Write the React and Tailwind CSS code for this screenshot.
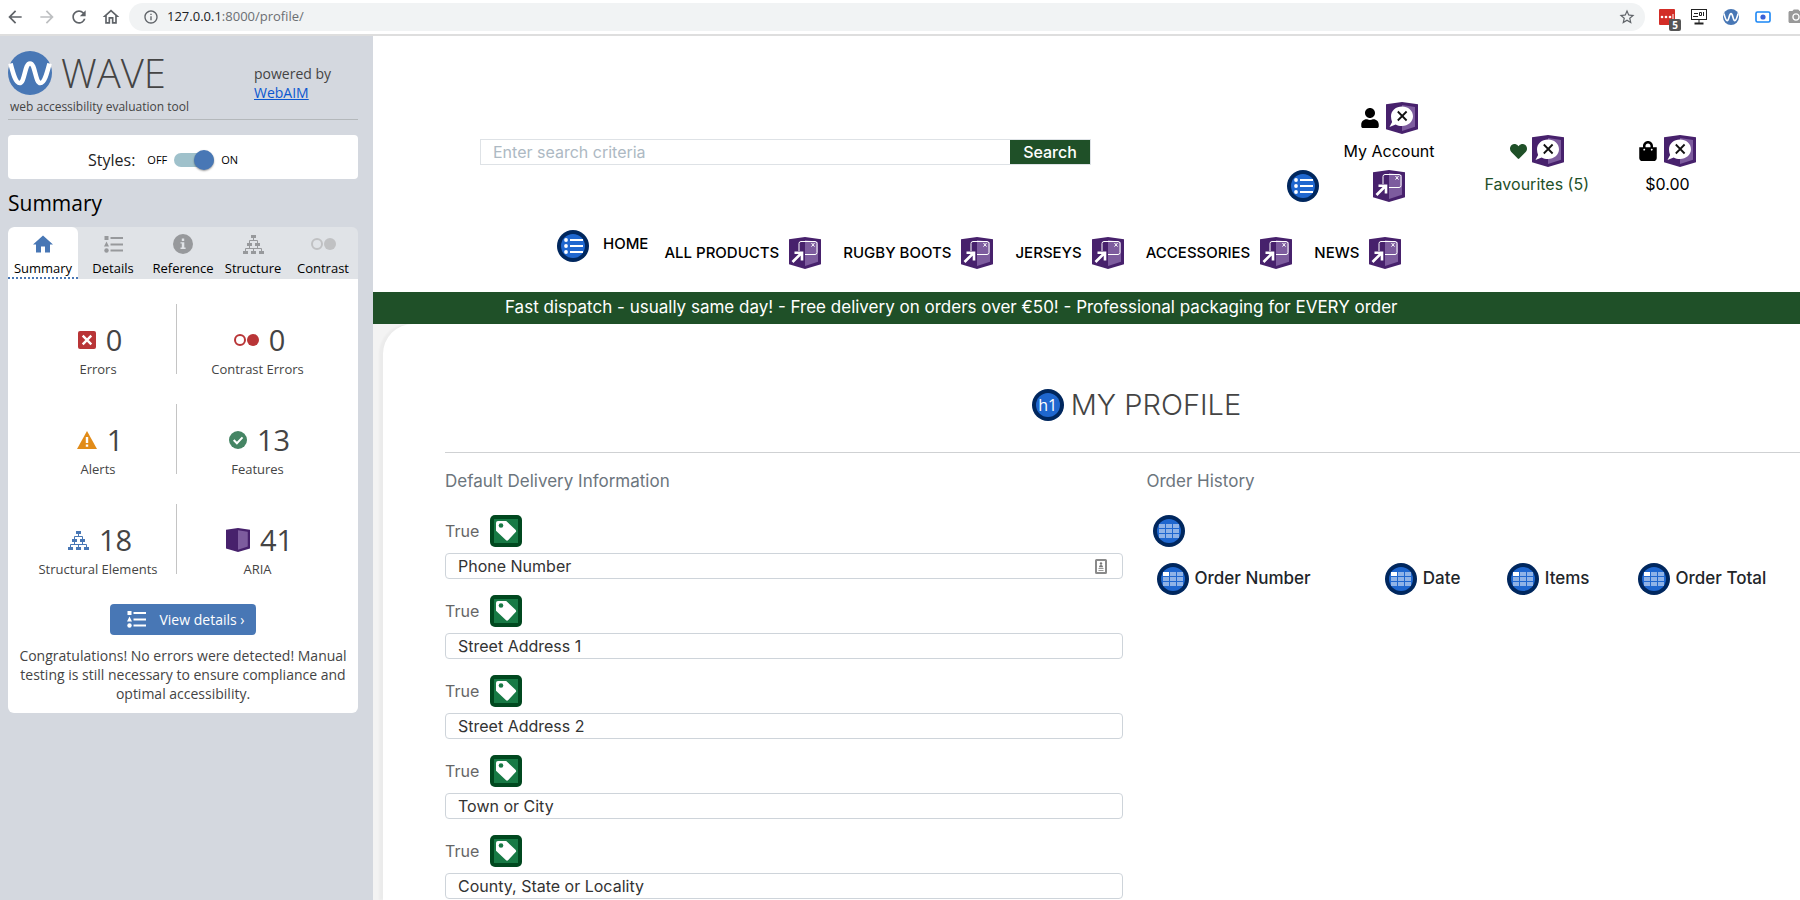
import React from "react";
import { FaUser, FaHeart, FaShoppingBag } from "react-icons/fa";
import { MdArrowBack, MdArrowForward, MdRefresh, MdOutlineHome, MdInfoOutline, MdStarBorder, MdCameraAlt } from "react-icons/md";

/* ---------- icons ---------- */

function WaveLogo({ className }) {
  return (
    <svg viewBox="0 0 44 44" className={className} aria-hidden="true">
      <circle cx="22" cy="22" r="22" fill="#4877b5" />
      <path d="M2.500 12.500C5 22 7.500 32 11.500 32C17 32 16.500 12.500 22 12.500C27.500 12.500 27 32 32.500 32C36.500 32 39 22 41.500 12.500" fill="none" stroke="#fff" strokeWidth="4.600" />
    </svg>
  );
}

function AriaBox({ className, children }) {
  return (
    <svg viewBox="0 0 32 32" className={className} aria-hidden="true">
      <path d="M0 2.200 16 0l16 2.200v25L16 32 0 27.200z" fill="#47216c" />
      <path d="M16 3l13 2v19.800L16 29z" fill="#7d5c9e" />
      {children}
    </svg>
  );
}

function AriaLabel() {
  return (
    <AriaBox className="size-8 shrink-0">
      <path d="M16 4.500c6 0 11 4.200 11 9.700s-5 9.700-11 9.700c-2.400 0-4.500-.5-6.300-1.500L3.500 25l2.600-5C5.400 18.300 5 16.300 5 14.200c0-5.500 5-9.700 11-9.700z" fill="#fff" />
      <path d="M11.800 9.500l8.800 9M20.600 9.500l-8.800 9" stroke="#111" strokeWidth="1.800" />
    </AriaBox>
  );
}

function AriaExpand() {
  return (
    <AriaBox className="size-8 shrink-0">
      <path d="M10 14V6.500a2 2 0 0 1 2-2h14a2 2 0 0 1 2 2v9a2 2 0 0 1-2 2H16" fill="none" stroke="#fff" strokeWidth="1" />
      <path d="M22.500 6l3 3.600M25.500 6l-3 3.600" stroke="#fff" strokeWidth="1" />
      <path d="M3.500 25L12 16.500M5.500 15.800H13v7.700" fill="none" stroke="#fff" strokeWidth="2.600" />
    </AriaBox>
  );
}

function BlueDisc({ children }) {
  return (
    <svg viewBox="0 0 32 32" className="size-8 shrink-0" aria-hidden="true">
      <circle cx="16" cy="16" r="16" fill="#00275e" />
      <circle cx="16" cy="16" r="12" fill="#1f67cf" />
      {children}
    </svg>
  );
}

function ListDisc() {
  return (
    <BlueDisc>
      {[10, 16, 22].map((y) => (
        <g key={y} fill="#fff">
          <circle cx="9" cy={y} r="1.900" />
          <rect x="13" y={y - 1} width="13" height="2" />
        </g>
      ))}
    </BlueDisc>
  );
}

function GridDisc({ header }) {
  return (
    <BlueDisc>
      {[9, 14, 19].map((y) =>
        [6, 13, 20].map((x) => (
          <rect key={x + "-" + y} x={x} y={y} width="6" height="4" fill={header && x === 6 && y === 9 ? "#fff" : "#8fb3e7"} />
        ))
      )}
    </BlueDisc>
  );
}

function TagBadge() {
  return (
    <svg viewBox="0 0 32 32" className="size-8 shrink-0" aria-hidden="true">
      <rect width="32" height="32" rx="5" fill="#00481f" />
      <rect x="4" y="4" width="24" height="24" fill="#177a45" />
      <path d="M6 8a2 2 0 0 1 2-2h8.200L25.500 14.700a1.700 1.700 0 0 1 0 2.500L18.300 25a1.700 1.700 0 0 1-2.500 0L6 15.800z" fill="#fff" />
      <circle cx="11" cy="10.500" r="2.300" fill="#177a45" />
    </svg>
  );
}

function HomeGlyph() {
  return (
    <svg viewBox="0 0 20 18" className="h-[18px] w-5" aria-hidden="true">
      <path d="M10 0.500L0 9.500h3V17.500h5v-6h4v6h5V9.500h3z" fill="#4877b5" />
    </svg>
  );
}

function DetailsGlyph() {
  return (
    <svg viewBox="0 0 19 17" className="h-[17px] w-[19px]" fill="currentColor" aria-hidden="true">
      <rect x="0.500" y="0" width="4" height="4" />
      <path d="M2.500 5.500l2.500 5H0z" />
      <circle cx="2.500" cy="14.500" r="2.200" />
      <rect x="6.500" y="1" width="12.500" height="2" />
      <rect x="6.500" y="7.500" width="12.500" height="2" />
      <rect x="6.500" y="13.500" width="12.500" height="2" />
    </svg>
  );
}

function InfoGlyph() {
  return (
    <svg viewBox="0 0 20 20" className="size-5" aria-hidden="true">
      <circle cx="10" cy="10" r="10" fill="#97999c" />
      <path d="M8.800 4.500h2.400v2.400H8.800zM7.500 8.200h3.800v5.400h1.300V15H7.500v-1.400h1.300V9.600H7.500z" fill="#e0e3e7" />
    </svg>
  );
}

function StructureGlyph() {
  return (
    <svg viewBox="0 0 21 19" className="h-[19px] w-[21px] shrink-0" aria-hidden="true">
      <g fill="currentColor">
        <rect x="8" y="0" width="5" height="3" />
        <rect x="4" y="8" width="5" height="3" />
        <rect x="12" y="8" width="5" height="3" />
        <rect x="0" y="16" width="5" height="3" />
        <rect x="8" y="16" width="5" height="3" />
        <rect x="16" y="16" width="5" height="3" />
      </g>
      <path d="M10.500 3v3M6.500 8V5.500h8V8M6.500 11v2.500M14.500 11v2.500M2.500 16v-2.500h16V16M10.500 13.500V16" fill="none" stroke="currentColor" />
    </svg>
  );
}

function ContrastGlyph() {
  return (
    <svg viewBox="0 0 25 12" className="h-3 w-[25px] shrink-0" aria-hidden="true">
      <circle cx="6" cy="6" r="5" fill="none" stroke="currentColor" strokeWidth="2" />
      <circle cx="19" cy="6" r="6" fill="currentColor" />
    </svg>
  );
}

function ErrorGlyph() {
  return (
    <svg viewBox="0 0 18 18" className="size-[18px] shrink-0" aria-hidden="true">
      <rect width="18" height="18" rx="2" fill="#b93537" />
      <path d="M4.700 4.700l8.600 8.600M13.300 4.700l-8.600 8.600" stroke="#fff" strokeWidth="2.400" />
    </svg>
  );
}

function AlertGlyph() {
  return (
    <svg viewBox="0 0 20 18" className="h-[18px] w-5 shrink-0" aria-hidden="true">
      <path d="M10 0l10 18H0z" fill="#e18b18" />
      <path d="M8.800 6h2.400v6H8.800zM8.800 13.500h2.400v2.300H8.800z" fill="#fff" />
    </svg>
  );
}

function FeatureGlyph() {
  return (
    <svg viewBox="0 0 18 18" className="size-[18px] shrink-0" aria-hidden="true">
      <circle cx="9" cy="9" r="9" fill="#458564" />
      <path d="M4.700 9l3.200 3.200 5.600-5.800" fill="none" stroke="#fff" strokeWidth="2" />
    </svg>
  );
}

function ContactGlyph() {
  return (
    <svg viewBox="0 0 12 15" className="h-[15px] w-3" aria-hidden="true">
      <rect x="1" y="1" width="10" height="13" rx="0.500" fill="#fff" stroke="#8a8a8a" strokeWidth="2" />
      <circle cx="6" cy="4.500" r="1.200" fill="#777" />
      <path d="M4 8.200c0-3 4-3 4 0z" fill="#777" />
      <path d="M3.500 9.500h5M3.500 11.500h5" stroke="#999" />
    </svg>
  );
}

/* ---------- browser toolbar ---------- */

function Toolbar() {
  return (
    <div className="flex h-9 shrink-0 items-center border-b-2 border-[#dedede] bg-white pl-[5px] font-['Open_Sans',sans-serif]">
      <div className="flex items-center gap-3 text-[#5f6368]">
        <button aria-label="Back"><MdArrowBack className="size-5" /></button>
        <button aria-label="Forward" className="text-[#bdbfc1]"><MdArrowForward className="size-5" /></button>
        <button aria-label="Reload"><MdRefresh className="size-5" /></button>
        <button aria-label="Home"><MdOutlineHome className="size-5" /></button>
      </div>
      <div className="ml-2 flex h-7 flex-1 items-center rounded-full bg-[#f1f3f4] pr-[9px] pl-[14px]">
        <MdInfoOutline className="size-4 text-[#5f6368]" />
        <p className="flex-1 pl-2 text-[13px] text-[#6b6f73]">
          <span className="text-[#202124]">127.0.0.1</span>:8000/profile/
        </p>
        <button aria-label="Bookmark"><MdStarBorder className="size-[18px] text-[#5f6368]" /></button>
      </div>
      <div className="flex h-full w-[155px] shrink-0 items-center gap-4 overflow-hidden pl-[14px]">
        <button aria-label="Passwords" className="relative">
          <svg viewBox="0 0 16 16" className="size-4">
            <rect width="16" height="16" rx="1" fill="#d32d27" />
            <circle cx="3" cy="8" r="1.300" fill="#fff" />
            <circle cx="7" cy="8" r="1.300" fill="#fff" />
            <circle cx="11" cy="8" r="1.300" fill="#fff" />
            <rect x="13.500" y="5" width="1" height="6" fill="#fff" />
          </svg>
          <span className="absolute top-[10px] left-[10px] flex size-3 items-center justify-center rounded-xs bg-[#555] text-[10px] leading-3 font-bold text-white">5</span>
        </button>
        <button aria-label="Desktop">
          <svg viewBox="0 0 16 16" className="size-4" fill="none" stroke="#222">
            <rect x="0.500" y="0.500" width="15" height="10" />
            <path d="M3 4.500h4M2 7.500h5M8.500 3.500h2v3h-2zM12.500 3v4M0 10.500h16M8 11v3" />
            <path d="M3.500 14.500h9" strokeWidth="2" />
          </svg>
        </button>
        <button aria-label="WAVE"><WaveLogo className="size-4" /></button>
        <button aria-label="Capture">
          <svg viewBox="0 0 16 12" className="h-3 w-4">
            <rect x="1" y="1" width="14" height="10" rx="1.500" fill="#fff" stroke="#1a86f5" strokeWidth="1.600" />
            <circle cx="8" cy="6" r="2.600" fill="#3a62d8" />
          </svg>
        </button>
        <button aria-label="Screenshot"><MdCameraAlt className="size-[18px] text-[#999]" /></button>
      </div>
    </div>
  );
}

/* ---------- evaluation sidebar ---------- */

const tabs = [
  { label: "Summary", icon: <HomeGlyph />, active: true },
  { label: "Details", icon: <DetailsGlyph /> },
  { label: "Reference", icon: <InfoGlyph /> },
  { label: "Structure", icon: <StructureGlyph /> },
  { label: "Contrast", icon: <span className="text-[#c0c1c3]"><ContrastGlyph /></span> },
];

const stats = [
  { label: "Errors", count: 0, icon: <ErrorGlyph /> },
  { label: "Contrast Errors", count: 0, icon: <span className="text-[#b93537]"><ContrastGlyph /></span> },
  { label: "Alerts", count: 1, icon: <AlertGlyph /> },
  { label: "Features", count: 13, icon: <FeatureGlyph /> },
  { label: "Structural Elements", count: 18, icon: <span className="text-[#4877b5]"><StructureGlyph /></span> },
  { label: "ARIA", count: 41, icon: <AriaBox className="size-6" /> },
];

function Sidebar() {
  return (
    <aside className="w-[373px] shrink-0 bg-[#d4d8df] pt-[15px] pr-[15px] pl-2 font-['Open_Sans',sans-serif] text-[#444]">
      <div className="flex items-start border-b border-[#b4b8bb] pb-[2px]">
        <div className="w-[246px]">
          <div className="flex h-11 items-center gap-[9px]">
            <WaveLogo className="size-11" />
            <span className="text-[40px] leading-[44px] font-light">WAVE</span>
          </div>
          <p className="mt-[2px] pl-[2px] text-[12px] leading-5">web accessibility evaluation tool</p>
        </div>
        <p className="pt-[13px] text-[14px] leading-[19px]">
          powered by
          <br />
          <a href="#webaim" className="text-[#0b57d0] underline">WebAIM</a>
        </p>
      </div>

      <div className="mt-[15px] flex h-11 items-center rounded bg-white pt-[6px] pl-20 text-black">
        <span className="mr-3 text-base text-[#222]">Styles:</span>
        <label className="flex items-center gap-[7px] text-[11px]">
          <span>OFF</span>
          <input type="checkbox" defaultChecked aria-label="Styles" className="peer sr-only" />
          <span className="flex h-[14px] w-10 items-center justify-end rounded-full bg-[#9fc1cb]">
            <span className="size-5 shrink-0 rounded-full bg-[#4877b5] shadow-[0_1px_2px_#0006]" />
          </span>
          <span>ON</span>
        </label>
      </div>

      <h2 className="mt-[9px] text-[21px] leading-[30px] text-black">Summary</h2>

      <div role="tablist" className="mt-[9px] grid grid-cols-5 overflow-hidden rounded-t-md bg-[#e0e3e7]">
        {tabs.map((t) => (
          <button
            key={t.label}
            role="tab"
            aria-selected={!!t.active}
            className={
              t.active
                ? "flex h-[52px] flex-col items-center rounded-t-md border-b-2 border-dotted border-[#4877b5] bg-white pt-1"
                : "flex h-[52px] flex-col items-center border-b-2 border-transparent pt-1"
            }
          >
            <span className="flex h-7 items-center pb-[2px] text-[#97999c]">{t.icon}</span>
            <span className="text-[13px] leading-[18px] text-black">{t.label}</span>
          </button>
        ))}
      </div>

      <div className="rounded-b-md bg-white pb-[10px] text-center">
        <div className="grid grid-cols-2 gap-y-[30px] pt-[25px] pr-6 pl-3">
          {stats.map((s, i) => (
            <div
              key={s.label}
              className={
                i % 2
                  ? "-mr-1 flex h-[70px] flex-col items-center"
                  : "flex h-[70px] flex-col items-center border-r border-[#c4c4c4]"
              }
            >
              <p className="flex h-[56px] items-center gap-[10px] pt-4 pl-1 text-[29px] leading-10">
                {s.icon}
                <span>{s.count}</span>
              </p>
              <p className="text-[13px] leading-[18px]">{s.label}</p>
            </div>
          ))}
        </div>
        <button className="mt-[30px] inline-flex h-[31px] items-center gap-[13px] rounded bg-[#4877b5] pr-[11px] pl-[17px] text-[14px] text-white">
          <DetailsGlyph />
          View details ›
        </button>
        <p className="mt-[11px] px-2 text-[14px] leading-[19px]">
          Congratulations! No errors were detected! Manual testing is still necessary to ensure compliance and optimal accessibility.
        </p>
      </div>
    </aside>
  );
}

/* ---------- shop page ---------- */

const menu = ["ALL PRODUCTS", "RUGBY BOOTS", "JERSEYS", "ACCESSORIES", "NEWS"];

function ShopHeader() {
  return (
    <header className="bg-white text-black">
      <div className="flex h-[179px] items-start justify-between pt-[66px] pr-[104px] pl-[107px]">
        <form className="mt-[37px] flex h-[26px] w-[611px] border border-[#dee2e6]">
          <input
            type="text"
            aria-label="Search"
            placeholder="Enter search criteria"
            className="min-w-0 flex-1 px-3 text-base outline-none placeholder:text-[#adb9c3]"
          />
          <button type="button" className="w-20 bg-[#1f5028] text-base font-medium text-white">Search</button>
        </form>
        <ul className="flex items-start gap-[50px] text-base">
          <li className="flex gap-6">
            <div className="pt-[68px]"><ListDisc /></div>
            <a href="#account" className="flex flex-col items-center">
              <span className="flex items-center gap-[7px]">
                <FaUser className="h-5 w-[18px]" />
                <AriaLabel />
              </span>
              <span className="mt-[5px] leading-6">My Account</span>
              <span className="mt-[7px]"><AriaExpand /></span>
            </a>
          </li>
          <li className="pt-[33px]">
            <a href="#favourites" className="flex flex-col items-center text-[#1f5028]">
              <span className="flex items-center gap-[5px]">
                <FaHeart className="size-[17px]" />
                <AriaLabel />
              </span>
              <span className="mt-[5px] leading-6">Favourites (5)</span>
            </a>
          </li>
          <li className="pt-[33px]">
            <a href="#bag" className="flex flex-col items-center">
              <span className="flex items-center gap-[7px]">
                <FaShoppingBag className="h-5 w-[18px]" />
                <AriaLabel />
              </span>
              <span className="mt-[5px] leading-6">$0.00</span>
            </a>
          </li>
        </ul>
      </div>
      <nav className="flex h-[77px] items-start pt-[15px] pl-[184px] text-[15px] font-medium">
        <ListDisc />
        <a href="#home" className="pt-[2px] pl-[14px] leading-6">HOME</a>
        <div className="flex gap-[22px] pt-[7px] pl-4">
          {menu.map((m) => (
            <a key={m} href={"#" + m.toLowerCase().replace(" ", "-")} className="flex items-center gap-[10px] leading-6">
              {m}
              <AriaExpand />
            </a>
          ))}
        </div>
      </nav>
    </header>
  );
}

const fields = [
  { id: "phone", text: "Phone Number", contact: true },
  { id: "street1", text: "Street Address 1" },
  { id: "street2", text: "Street Address 2" },
  { id: "town", text: "Town or City" },
  { id: "county", text: "County, State or Locality" },
];

function Profile() {
  return (
    <div className="flex-1 bg-[#f3f3f3] pl-[10px]">
      <div className="h-full overflow-hidden rounded-tl-[30px] bg-white pl-[62px] shadow-[-4px_0_2px_#00000008]">
        <div className="-mr-6">
          <h1 className="flex h-[129px] items-center justify-center gap-[7px] border-b border-[#cfd1d3] pt-[34px] pl-1 text-[29px] font-light text-[#444]">
            <span className="relative flex">
              <BlueDisc />
              <span className="absolute inset-0 flex items-center justify-center font-['Open_Sans',sans-serif] text-[16px] font-normal text-white">h1</span>
            </span>
            MY PROFILE
          </h1>
          <div className="grid grid-cols-2 gap-6 pt-4 text-base">
            <form>
              <p className="text-[17px] leading-6 text-[#6c757d]">Default Delivery Information</p>
              <div className="mt-[22px] flex flex-col gap-4">
                {fields.map((f) => (
                  <div key={f.id}>
                    <label htmlFor={f.id} className="flex h-8 items-center gap-[11px] text-base text-[#666]">
                      True
                      <TagBadge />
                    </label>
                    <div className="mt-[6px] flex h-[26px] items-center rounded border border-[#ced4da] pr-[15px]">
                      <input id={f.id} type="text" placeholder={f.text} className="h-6 min-w-0 flex-1 px-3 text-base outline-none placeholder:text-[#333]" />
                      {f.contact && <ContactGlyph />}
                    </div>
                  </div>
                ))}
              </div>
            </form>
            <section className="text-[#6c757d]">
              <p className="text-[17px] leading-6">Order History</p>
              <div className="mt-[22px] pl-[6px]"><GridDisc /></div>
              <table className="mt-4 w-full table-fixed text-left text-[#212529]">
                <thead>
                  <tr>
                    {[
                      ["Order Number", "w-[34%] pl-[10px] text-[17px] font-medium"],
                      ["Date", "w-[18%] pl-2 text-[17px] font-medium"],
                      ["Items", "w-[19%] pl-2 text-[17px] font-medium"],
                      ["Order Total", "w-[29%] pl-[10px] text-[17px] font-medium"],
                    ].map(([h, cls]) => (
                      <th key={h} scope="col" className={cls}>
                        <span className="flex items-center gap-[6px] whitespace-nowrap">
                          <GridDisc header />
                          {h}
                        </span>
                      </th>
                    ))}
                  </tr>
                </thead>
              </table>
            </section>
          </div>
        </div>
      </div>
    </div>
  );
}

export default function App() {
  return (
    <div className="flex h-screen flex-col overflow-hidden bg-white">
      <Toolbar />
      <div className="flex min-h-0 flex-1">
        <Sidebar />
        <main className="flex min-w-0 flex-1 flex-col font-[Inter,sans-serif]">
          <ShopHeader />
          <p className="flex h-8 shrink-0 items-center bg-[#1f5028] pl-[132px] text-[17px] text-white">
            Fast dispatch - usually same day! - Free delivery on orders over €50! - Professional packaging for EVERY order
          </p>
          <Profile />
        </main>
      </div>
    </div>
  );
}
